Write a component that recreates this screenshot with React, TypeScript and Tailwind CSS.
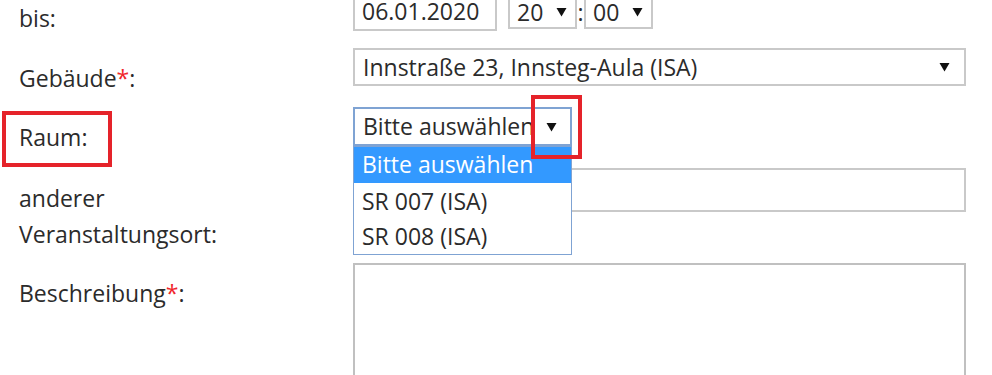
import React from "react";

function Arrow() {
  return (
    <svg width="11" height="10" viewBox="0 0 11 10" className="shrink-0">
      <polygon points="0.5,1 10.5,1 5.5,9.5" fill="#111" />
    </svg>
  );
}

function Label({ children, star }: { children: React.ReactNode; star?: boolean }) {
  return (
    <div className="h-full w-[353px] shrink-0 pl-[19px] pt-[12px] leading-[36px]">
      {children}
      {star && <span className="text-[#f0262b]">*</span>}:
    </div>
  );
}

export default function App() {
  return (
    <div className="h-[375px] w-[992px] overflow-hidden bg-white font-['Open_Sans',sans-serif] text-[23px] text-[#2b2b2b]">
      <div className="-mt-[12px]">
        {/* bis */}
        <div className="flex h-[43px]">
          <Label>bis</Label>
          <div className="flex items-start gap-[11px]">
            <div className="flex h-[43px] w-[144px] items-center border-2 border-[#c9c9c9] pl-[7px] pt-[4px]">
              06.01.2020
            </div>
            <div className="mt-[3px] flex items-center">
              <div className="flex h-[38px] w-[69px] items-center justify-between border-2 border-[#c9c9c9] pl-[7px] pr-[8px] pt-[4px]">
                20
                <Arrow />
              </div>
              <span className="w-[7px] pt-[4px] text-center">:</span>
              <div className="flex h-[38px] w-[69px] items-center justify-between border-2 border-[#c9c9c9] pl-[7px] pr-[8px] pt-[4px]">
                00
                <Arrow />
              </div>
            </div>
          </div>
        </div>

        {/* Gebäude */}
        <div className="mt-[17px] flex h-[38px]">
          <Label star>Gebäude</Label>
          <div className="flex h-[38px] w-[613px] items-center justify-between border-2 border-[#c9c9c9] pl-[8px] pr-[14px]">
            Innstraße 23, Innsteg-Aula (ISA)
            <Arrow />
          </div>
        </div>

        {/* Raum */}
        <div className="mt-[21px] flex h-[39px]">
          <div className="relative">
            <Label>Raum</Label>
            <div className="absolute left-[2px] top-[4px] h-[56px] w-[110px] border-[4px] border-[#e5232a]" />
          </div>
          <div className="relative">
            <div className="flex h-[39px] w-[219px] items-center justify-between border-2 border-[#7fa3d3] pl-[8px] pr-[13px]">
              Bitte auswählen
              <Arrow />
            </div>
            <div className="absolute left-0 top-[39px] z-10 w-[219px] border border-[#7fa3d3] bg-white">
              <div className="h-[36px] bg-[#3399ff] pl-[8px] leading-[35px] text-white">Bitte auswählen</div>
              <div className="h-[36px] pl-[8px] leading-[36px]">SR 007 (ISA)</div>
              <div className="h-[35px] pl-[8px] leading-[35px]">SR 008 (ISA)</div>
            </div>
            <div className="absolute left-[178px] -top-[12px] z-20 h-[64px] w-[51px] border-[4px] border-[#e5232a]" />
          </div>
        </div>

        {/* anderer Veranstaltungsort */}
        <div className="mt-[22px] flex h-[44px]">
          <div className="h-full w-[353px] shrink-0 pl-[19px] pt-[12px] leading-[36px]">
            anderer
            <br />
            Veranstaltungsort:
          </div>
          <div className="h-[44px] w-[613px] border-2 border-[#c9c9c9]" />
        </div>

        {/* Beschreibung */}
        <div className="mt-[51px] flex">
          <Label star>Beschreibung</Label>
          <div className="h-[140px] w-[613px] border-2 border-[#c0c0c0]" />
        </div>
      </div>
    </div>
  );
}
